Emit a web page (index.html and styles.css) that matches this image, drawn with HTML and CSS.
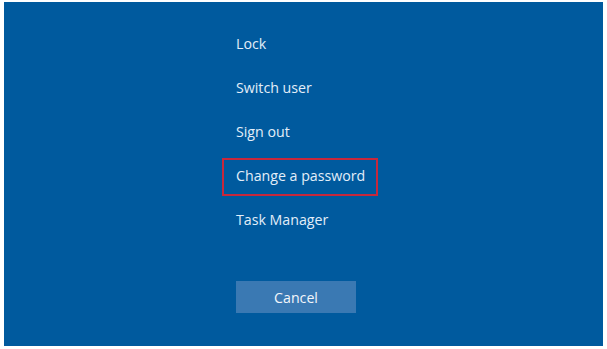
FILE: index.html
```html
<!DOCTYPE html>
<html lang="en">
<head>
    <meta charset="UTF-8">
    <title>Security options</title>
    <link rel="stylesheet" href="styles.css">
</head>
<body>
    <!-- Ctrl+Alt+Del screen -->
    <div class="screen">
        <ul class="options">
            <li class="option"><span>Lock</span></li>
            <li class="option"><span>Switch user</span></li>
            <li class="option"><span>Sign out</span></li>
            <li class="option marked"><span>Change a password</span></li>
            <li class="option"><span>Task Manager</span></li>
        </ul>
        <button class="cancel">Cancel</button>
    </div>
</body>
</html>
```
FILE: styles.css
```css
* {
    margin: 0;
    padding: 0;
    box-sizing: border-box;
}

html, body {
    height: 100%;
}

body {
    background: #fff;
    padding: 2px 4px 3px 4px;
    font-family: "Open Sans", "Noto Sans", sans-serif;
    overflow: hidden;
}

/* Blue panel */
.screen {
    height: 100%;
    background: #005a9e;
    padding: 19px 0 0 232px;
    display: flex;
    flex-direction: column;
    align-items: flex-start;
}

.options {
    list-style: none;
}

.option {
    height: 44px;
    display: flex;
    align-items: center;
    font-size: 14.2px;
    color: #e3eef9;
}

/* Red highlight around the chosen item */
.option.marked span {
    display: inline-block;
    line-height: 16px;
    padding: 8px 11px 10px 12px;
    margin: 3px 0 0 -14px;
    border: 2px solid #c8283c;
}

.cancel {
    margin-top: 40px;
    width: 120px;
    height: 32px;
    border: none;
    background: #3a79b3;
    color: #f2f6fb;
    font-family: inherit;
    font-size: 14.2px;
}
```
